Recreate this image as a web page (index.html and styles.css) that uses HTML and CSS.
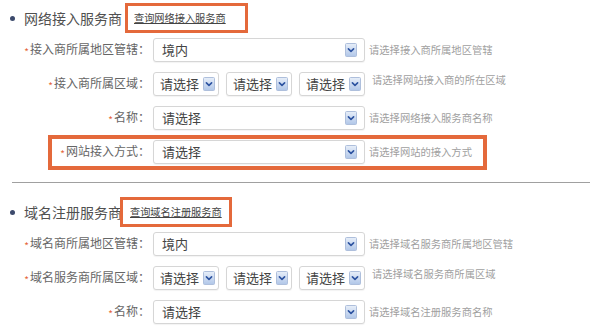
FILE: index.html
```html
<!DOCTYPE html>
<html lang="zh-CN">
<head>
<meta charset="utf-8">
<title>服务商信息</title>
<link rel="stylesheet" href="styles.css">
</head>
<body>
<svg width="0" height="0" class="defs" aria-hidden="true">
  <defs>
    <linearGradient id="arrowGrad" x1="0" y1="0" x2="0" y2="1">
      <stop offset="0" stop-color="#e8eff9"/>
      <stop offset="1" stop-color="#b0c6e8"/>
    </linearGradient>
    <symbol id="arrow" viewBox="0 0 12 14">
      <rect x="0.5" y="0.5" width="11" height="13" rx="1" fill="url(#arrowGrad)" stroke="#aebfdc"/>
      <path d="M3.4 5.8 L6 8.3 L8.6 5.8" fill="none" stroke="#2c52a0" stroke-width="1.6" stroke-linecap="round" stroke-linejoin="round"/>
    </symbol>
  </defs>
</svg>
<div class="page">
  <section class="group">
    <div class="group-head">
      <span class="dot"></span>
      <h2 class="group-title">网络接入服务商</h2>
      <a class="query query-net" href="#">查询网络接入服务商</a>
    </div>
    <div class="rows">
      <div class="row">
        <label class="label"><i class="req">*</i>接入商所属地区管辖：</label>
        <div class="select select-wide"><span class="val">境内</span><svg class="arrow"><use href="#arrow"/></svg></div>
        <span class="hint">请选择接入商所属地区管辖</span>
      </div>
      <div class="row">
        <label class="label"><i class="req">*</i>接入商所属区域：</label>
        <div class="select-group">
          <div class="select select-small"><span class="val">请选择</span><svg class="arrow"><use href="#arrow"/></svg></div>
          <div class="select select-small"><span class="val">请选择</span><svg class="arrow"><use href="#arrow"/></svg></div>
          <div class="select select-small"><span class="val">请选择</span><svg class="arrow"><use href="#arrow"/></svg></div>
        </div>
        <span class="hint hint-top">请选择网站接入商的所在区域</span>
      </div>
      <div class="row">
        <label class="label"><i class="req">*</i>名称：</label>
        <div class="select select-wide"><span class="val">请选择</span><svg class="arrow"><use href="#arrow"/></svg></div>
        <span class="hint">请选择网络接入服务商名称</span>
      </div>
      <div class="row row-mark">
        <label class="label label-mark"><i class="req">*</i>网站接入方式：</label>
        <div class="select select-wide"><span class="val">请选择</span><svg class="arrow"><use href="#arrow"/></svg></div>
        <span class="hint">请选择网站的接入方式</span>
      </div>
    </div>
  </section>

  <hr class="divider">

  <section class="group group-second">
    <div class="group-head">
      <span class="dot"></span>
      <h2 class="group-title">域名注册服务商</h2>
      <a class="query query-domain" href="#">查询域名注册服务商</a>
    </div>
    <div class="rows">
      <div class="row">
        <label class="label"><i class="req">*</i>域名商所属地区管辖：</label>
        <div class="select select-wide"><span class="val">境内</span><svg class="arrow"><use href="#arrow"/></svg></div>
        <span class="hint">请选择域名服务商所属地区管辖</span>
      </div>
      <div class="row">
        <label class="label"><i class="req">*</i>域名服务商所属区域：</label>
        <div class="select-group">
          <div class="select select-small"><span class="val">请选择</span><svg class="arrow"><use href="#arrow"/></svg></div>
          <div class="select select-small"><span class="val">请选择</span><svg class="arrow"><use href="#arrow"/></svg></div>
          <div class="select select-small"><span class="val">请选择</span><svg class="arrow"><use href="#arrow"/></svg></div>
        </div>
        <span class="hint hint-top">请选择域名服务商所属区域</span>
      </div>
      <div class="row">
        <label class="label"><i class="req">*</i>名称：</label>
        <div class="select select-wide"><span class="val">请选择</span><svg class="arrow"><use href="#arrow"/></svg></div>
        <span class="hint">请选择域名注册服务商名称</span>
      </div>
    </div>
  </section>
</div>
</body>
</html>
```

FILE: styles.css
```css
* {
  box-sizing: border-box;
}

html, body {
  margin: 0;
  padding: 0;
  background: #ffffff;
}

body {
  font-family: "Noto Sans CJK SC", "Noto Sans", sans-serif;
  color: #555555;
  width: 600px;
  height: 326px;
  overflow: hidden;
}

.defs {
  position: absolute;
  width: 0;
  height: 0;
}

.page {
  padding-top: 3px;
}

.group-head {
  display: flex;
  align-items: center;
  height: 30px;
}

.dot {
  width: 5px;
  height: 5px;
  border-radius: 50%;
  background: #3c4a6c;
  margin-left: 10px;
  margin-right: 9px;
  flex: none;
}

.group-title {
  margin: 0;
  font-size: 14px;
  line-height: 20px;
  font-weight: normal;
  color: #505050;
  white-space: nowrap;
}

.query {
  display: flex;
  align-items: center;
  height: 30px;
  border: 3px solid #e4693b;
  padding-left: 6px;
  font-size: 10.2px;
  line-height: 14px;
  color: #444444;
  text-decoration: underline;
  white-space: nowrap;
  flex: none;
}

.query-net {
  width: 123px;
  margin-left: 3px;
}

.query-domain {
  width: 112px;
  margin-left: -2px;
  padding-left: 7px;
}

.rows {
  display: flex;
  flex-direction: column;
  gap: 10px;
  margin-top: 5px;
}

.row {
  display: flex;
  align-items: center;
  height: 24px;
}

.label {
  width: 150px;
  margin-right: 3px;
  text-align: right;
  font-size: 12px;
  line-height: 16px;
  color: #666666;
  white-space: nowrap;
  flex: none;
}

.req {
  font-style: normal;
  color: #e5643a;
  font-size: 10px;
  margin-right: 1px;
  vertical-align: -2px;
}

.select {
  display: flex;
  align-items: center;
  justify-content: space-between;
  height: 24px;
  background: #ffffff;
  border: 1px solid #d6d6d6;
  border-radius: 3px;
  box-shadow: 0 1px 1px rgba(0, 0, 0, 0.05);
  flex: none;
}

.select-wide {
  width: 212px;
  padding: 0 7px 0 8px;
}

.select-small {
  width: 66px;
  padding: 0 3px 0 6px;
}

.select-group {
  display: flex;
  gap: 7px;
  flex: none;
}

.val {
  font-size: 13px;
  line-height: 18px;
  color: #444444;
  white-space: nowrap;
}

.arrow {
  width: 12px;
  height: 14px;
  flex: none;
}

.hint {
  margin-left: 4px;
  font-size: 10.3px;
  line-height: 14px;
  color: #a0a0a0;
  white-space: nowrap;
}

.hint-top {
  align-self: flex-start;
  margin-left: 7px;
  margin-top: 1px;
}

.row-mark {
  height: auto;
  align-self: flex-start;
  margin-top: -5px;
  margin-left: 48px;
  border: 4px solid #e4693b;
  padding: 1px 11px 2px 0;
}

.label-mark {
  width: 98px;
}

.divider {
  margin: 12px 10px 0 12px;
  height: 0;
  border: 0;
  border-top: 1px solid #a0a0a0;
}

.group-second {
  margin-top: 14px;
}
```
